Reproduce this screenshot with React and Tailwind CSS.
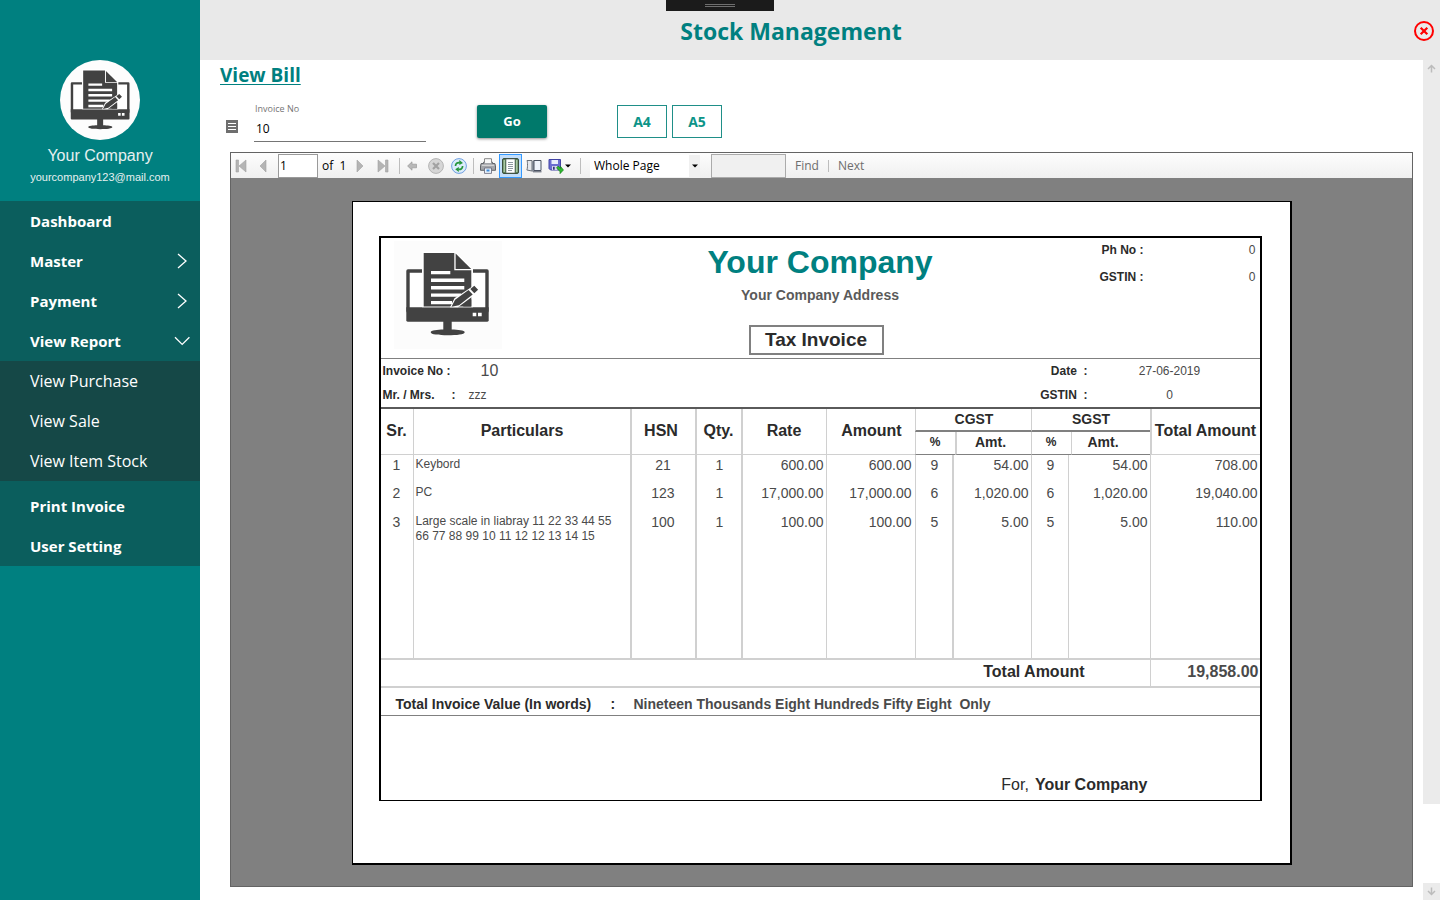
import { useState } from "react";
import clsx from "clsx";

const menu = [
  { label: "Dashboard" },
  { label: "Master", arrow: "right" },
  { label: "Payment", arrow: "right" },
  { label: "View Report", arrow: "down" },
];

const reports = ["View Purchase", "View Sale", "View Item Stock"];

const items = [
  { sr: 1, name: "Keybord", hsn: "21", qty: 1, rate: "600.00", amount: "600.00", pct: 9, tax: "54.00", total: "708.00" },
  { sr: 2, name: "PC", hsn: "123", qty: 1, rate: "17,000.00", amount: "17,000.00", pct: 6, tax: "1,020.00", total: "19,040.00" },
  { sr: 3, name: "Large scale in liabray 11 22 33 44 55 66 77 88 99 10 11 12 12 13 14 15", hsn: "100", qty: 1, rate: "100.00", amount: "100.00", pct: 5, tax: "5.00", total: "110.00" },
];

const Logo = ({ className }) => (
  <svg viewBox="0 0 108 108" className={className} aria-hidden="true">
    <rect x="14" y="30" width="79" height="40" fill="#fff" stroke="#424242" strokeWidth="3.4" strokeLinejoin="round" />
    <path d="M12.3 66.3h82.4v13a1.4 1.4 0 0 1-1.4 1.4H13.7a1.4 1.4 0 0 1-1.4-1.4z" fill="#424242" />
    <path d="M28 10.3h34L79 27.5V66.3H28z" fill="#fff" />
    <path d="M29.7 12h30.600v17.200h17V65.400H29.700z" fill="#424242" />
    <path d="M61.600 12.500l15.600 15.600H61.600z" fill="#424242" />
    <path d="M37 30h19.3v3.3H37zM37 37.5h33.3v3.4H37zM37 45h33.3v3.4H37zM37 52.5h30v3.3H37zM37 60h21v3.3H37z" fill="#fff" />
    <path d="M56 66.3l4.5-9L79.5 44.8l5 4.5-3 4L64 66.3z" fill="#fff" />
    <path d="M57.5 65.8l3.6-7L74.500 49l4.200 4.600L65 64.200zM76.300 47.900l4-3.100 3.800 4-3.800 3.400z" fill="#424242" />
    <path d="M69 65.400l8.300-7.200v7.200z" fill="#424242" />
    <path d="M78.700 71.700h3.600v3.600h-3.600zM84 71.700h3.700v3.600H84z" fill="#fff" />
    <path d="M49.300 80h8.400v8.600c6 .2 13 .8 13 2.700 0 2.200-8 3-17 3s-17-.8-17-3c0-1.900 7-2.500 12.600-2.700z" fill="#424242" />
  </svg>
);

const Arrow = ({ dir }) => (
  <svg width="16" height="16" viewBox="0 0 16 16" fill="none" stroke="#fff" strokeWidth="1.3" aria-hidden="true">
    {dir === "down" ? <path d="M1 4.200l7.200 7.200 7.200-7.200" /> : <path d="M4 1l8 7-8 7" />}
  </svg>
);

const Sidebar = () => (
  <aside className="w-[200px] shrink-0 bg-[#008080] text-white">
    <div className="flex h-[201px] flex-col items-center pt-[60px] font-['Liberation_Sans',sans-serif] text-[#e6f0f0]">
      <div className="flex h-20 w-20 items-center justify-center rounded-full bg-[#fdfdfd]">
        <Logo className="h-[77px] w-[77px]" />
      </div>
      <p className="mt-1 text-[16px] leading-6">Your Company</p>
      <p className="text-[11px] leading-[18px]">yourcompany123@mail.com</p>
    </div>

    <nav className="bg-[#0b5e5d] text-[15px]">
      {menu.map((m) => (
        <a key={m.label} href="#" className="flex h-10 items-center justify-between pl-[30px] pr-[10px] font-bold">
          {m.label}
          {m.arrow && <Arrow dir={m.arrow} />}
        </a>
      ))}
      <div className="mb-[5px] bg-[#154847] text-[16px]">
        {reports.map((r) => (
          <a key={r} href="#" className="flex h-10 items-center pl-[30px]">{r}</a>
        ))}
      </div>
      <a href="#" className="flex h-10 items-center pl-[30px] font-bold">Print Invoice</a>
      <a href="#" className="flex h-10 items-center pl-[30px] font-bold">User Setting</a>
    </nav>
  </aside>
);

const ToolButton = ({ label, className, children }) => (
  <button type="button" aria-label={label} className={clsx("flex h-6 items-center justify-center", className || "w-[23px]")}>
    {children}
  </button>
);

const Divider = ({ className }) => <span className={clsx("w-px bg-[#bdbdbd]", className)}></span>;

const Toolbar = () => {
  const [page, setPage] = useState("1");
  const [find, setFind] = useState("");

  return (
    <div className="flex h-[25px] items-center bg-linear-to-b from-[#fdfdfd] to-[#f0f0f0] text-[12px] text-black">
      <ToolButton label="First page" className="w-5">
        <svg width="12" height="14" viewBox="0 0 12 14"><path d="M1 1h2.500v12H1zM11 1v12L4 7z" fill="#b4b4b4" stroke="#a2a2a2" strokeWidth=".6" /></svg>
      </ToolButton>
      <ToolButton label="Previous page" className="w-6">
        <svg width="8" height="14" viewBox="0 0 8 14"><path d="M7 1v12L1 7z" fill="#b4b4b4" stroke="#a2a2a2" strokeWidth=".6" /></svg>
      </ToolButton>
      <input aria-label="Page number" value={page} onChange={(e) => setPage(e.target.value)} className="ml-[3px] h-6 w-10 border border-[#9a9a9a] bg-white px-px pb-px outline-none" />
      <span className="ml-1 w-[26px] whitespace-pre">of  1</span>
      <ToolButton label="Next page">
        <svg width="8" height="14" viewBox="0 0 8 14"><path d="M1 1v12l6-6z" fill="#b4b4b4" stroke="#a2a2a2" strokeWidth=".6" /></svg>
      </ToolButton>
      <ToolButton label="Last page">
        <svg width="12" height="14" viewBox="0 0 12 14"><path d="M8.500 1H11v12H8.500zM1 1v12l7-6z" fill="#b4b4b4" stroke="#a2a2a2" strokeWidth=".6" /></svg>
      </ToolButton>
      <Divider className="ml-[5px] h-4" />
      <ToolButton label="Back" className="w-6">
        <svg width="10" height="10" viewBox="0 0 10 10"><path d="M.6 5L5 .8v2.400h4.500v3.600H5v2.400z" fill="#b8b8b8" stroke="#999" strokeWidth=".7" /></svg>
      </ToolButton>
      <ToolButton label="Stop">
        <svg width="16" height="16" viewBox="0 0 16 16"><circle cx="8" cy="8" r="7.400" fill="#d6d6d6" stroke="#b4b4b4" /><path d="M5 5l6 6M11 5l-6 6" stroke="#a2a2a2" strokeWidth="2.200" /></svg>
      </ToolButton>
      <ToolButton label="Refresh">
        <svg width="16" height="16" viewBox="0 0 16 16">
          <circle cx="8" cy="8" r="7.400" fill="#dcecfb" stroke="#6f9fe0" />
          <path d="M4.500 8C4.500 5.500 6.300 4.300 8.800 4.600M11.600 8c0 2.500-1.800 3.700-4.200 3.400" fill="none" stroke="#27963b" strokeWidth="1.700" />
          <path d="M8.300 2l3.700 3-3.700 2zM7.800 9.100v4.800L4.200 11.200z" fill="#27963b" />
        </svg>
      </ToolButton>
      <Divider className="ml-[3px] mr-[2px] h-4" />
      <ToolButton label="Print">
        <svg width="16" height="16" viewBox="0 0 16 16">
          <path d="M4.500.8h7v5h-7z" fill="#f4f4f4" stroke="#777" />
          <path d="M1.200 5.500h2.500V4h8.600v1.500h2.500l.7 2v4.800H.5V7.500z" fill="#a4a6aa" stroke="#55585c" strokeWidth=".9" />
          <path d="M4.800 1.500h6.400V5H4.800z" fill="#fafafa" />
          <path d="M2 7.300h12" stroke="#dedede" />
          <path d="M4.500 10h7v5.400h-7z" fill="#eaf3fc" stroke="#667" strokeWidth=".8" />
          <path d="M6.500 11.500h3v2h-3z" fill="#3d8ad8" />
        </svg>
      </ToolButton>
      <ToolButton label="Print layout" className="w-[23px] border border-[#3399ff] bg-[#c3defa]">
        <svg width="17" height="16" viewBox="0 0 17 16">
          <rect x=".5" y=".5" width="16" height="15" rx="1.500" fill="#5b7f5a" stroke="#3c4f3c" />
          <path d="M1.500 2h1.500v12H1.500zM14 2h1.500v12H14z" fill="#a9c7a2" />
          <path d="M4 1h9v14H4z" fill="#fff" stroke="#53605a" strokeWidth=".6" />
          <path d="M6 4.500h5M6 6.500h5M6 8.500h5M6 10.500h5M6 12.500h4" stroke="#8e98a0" />
        </svg>
      </ToolButton>
      <ToolButton label="Page setup">
        <svg width="16" height="14" viewBox="0 0 16 14">
          <path d="M1 1.500h5v10.500L.8 11c.9-1 .9-8.500.2-9.500z" fill="#e4e7ec" stroke="#6a6f78" />
          <path d="M6 2.500l2-1.500v10.500l-2 1.500z" fill="#848b98" />
          <path d="M8 1.500h7v10H8z" fill="#eef3fc" stroke="#4b5262" />
          <path d="M7 12.800h8.500" stroke="#4b5262" />
        </svg>
      </ToolButton>
      <ToolButton label="Export" className="w-[29px] gap-px">
        <svg width="16" height="16" viewBox="0 0 16 16">
          <path d="M1 1.500h11.500v10.500H2.500L1 10.500z" fill="#6a6dd0" stroke="#4143a4" />
          <path d="M3.500 2h6.500v4H3.500z" fill="#e8eefc" />
          <path d="M4 8h5.500v4H4z" fill="#d6d8ec" />
          <path d="M5 8.800h1.700v3H5z" fill="#333680" />
          <path d="M8.500 9.800l1.700-1.700 2.300 2.200V8.300l3 3.700-3.500 3.700v-2z" fill="#2eb82e" stroke="#13761a" strokeWidth=".6" />
        </svg>
        <svg width="6" height="4" viewBox="0 0 6 4"><path d="M0 .5h6L3 3.500z" fill="#000" /></svg>
      </ToolButton>
      <Divider className="ml-[6px] mr-[9px] h-4" />
      <div className="relative flex h-[22px] w-[110px] items-center bg-white">
        <select aria-label="Zoom" defaultValue="Whole Page" className="h-full w-full appearance-none bg-transparent pl-1 outline-none">
          <option>Whole Page</option>
          <option>Page Width</option>
          <option>100%</option>
        </select>
        <span className="pointer-events-none absolute inset-y-0 right-0 flex w-[11px] items-center justify-center bg-[#f0f0f0]">
          <svg width="6" height="4" viewBox="0 0 6 4"><path d="M0 .5h6L3 3.500z" fill="#000" /></svg>
        </span>
      </div>
      <input aria-label="Find text" value={find} onChange={(e) => setFind(e.target.value)} className="ml-[11px] h-6 w-[75px] border border-[#ababab] bg-[#f0f0f0] px-1 outline-none" />
      <button type="button" className="ml-[9px] text-[#6d6d6d]">Find</button>
      <Divider className="mx-[9px] h-3" />
      <button type="button" className="text-[#6d6d6d]">Next</button>
    </div>
  );
};

const Th = ({ className, ...props }) => (
  <th className={clsx("border-[#d0d0d0] pl-0 pt-0 text-center font-bold text-[#2b2b2b]", className)} {...props} />
);

const ItemsTable = () => (
  <table className="w-full table-fixed border-separate border-spacing-0 text-[14px] text-[#4a4a4a]">
    <colgroup>
      <col className="w-[32px]" />
      <col />
      <col className="w-[65px]" />
      <col className="w-[46px]" />
      <col className="w-[85px]" />
      <col className="w-[89px]" />
      <col className="w-[37px]" />
      <col className="w-[3px]" />
      <col className="w-[76px]" />
      <col className="w-[37px]" />
      <col className="w-[3px]" />
      <col className="w-[78px]" />
      <col className="w-[110px]" />
    </colgroup>
    <thead>
      <tr className="h-[23px] text-[16px]">
        <Th rowSpan={2} className="border-b pb-[2px] pr-0">Sr.</Th>
        <Th rowSpan={2} className="border-b border-l pb-[2px] pr-0">Particulars</Th>
        <Th rowSpan={2} className="border-b border-l-2 pb-[2px] pr-[6px]">HSN</Th>
        <Th rowSpan={2} className="border-b border-l-2 pb-[2px] pr-[2px]">Qty.</Th>
        <Th rowSpan={2} className="border-b border-l-2 pb-[2px] pr-[2px]">Rate</Th>
        <Th rowSpan={2} className="border-b border-l pb-[2px] pr-0">Amount</Th>
        <Th colSpan={3} className="border-b-2 border-l border-b-[#808080] pb-px pr-0 text-[14px] leading-5">CGST</Th>
        <Th colSpan={3} className="border-b-2 border-l border-b-[#808080] pb-px pr-0 text-[14px] leading-5">SGST</Th>
        <Th rowSpan={2} className="whitespace-nowrap border-b border-l-2 pb-[2px] pr-0">Total Amount</Th>
      </tr>
      <tr className="h-[23px] text-[14px] leading-5">
        <Th colSpan={2} className="border-b border-l border-b-[#808080] pb-[2px] pr-[2px] text-[12px]">%</Th>
        <Th className="border-b border-l-2 border-b-[#808080] pb-[2px] pr-2">Amt.</Th>
        <Th colSpan={2} className="border-b border-l border-b-[#808080] pb-[2px] pr-[2px] text-[12px]">%</Th>
        <Th className="border-b border-l border-b-[#808080] pb-[2px] pr-4">Amt.</Th>
      </tr>
    </thead>
    <tbody className="[&_td]:border-[#d0d0d0] [&_td]:p-0 [&_td]:align-top">
      {items.map((it, i) => (
        <tr key={it.sr} className={clsx("leading-5", i === items.length - 1 ? "h-[146px]" : i === 0 ? "h-[28px]" : "h-[29px]")}>
          <td className="text-center">{it.sr}</td>
          <td className="border-l"><p className="pl-[2px] pr-3 pt-[2px] text-[12px] leading-[15px]">{it.name}</p></td>
          <td className="border-l-2 text-center"><p className="pr-[2px]">{it.hsn}</p></td>
          <td className="border-l-2 text-center">{it.qty}</td>
          <td className="border-l-2 text-right"><p className="pr-[3px]">{it.rate}</p></td>
          <td className="border-l text-right"><p className="pr-1">{it.amount}</p></td>
          <td className="border-l text-center">{it.pct}</td>
          <td colSpan={2} className="border-l-2 text-right"><p className="pr-[3px]">{it.tax}</p></td>
          <td className="border-l text-center">{it.pct}</td>
          <td colSpan={2} className="border-l text-right"><p className="pr-[2px]">{it.tax}</p></td>
          <td className="border-l text-right"><p className="pr-[2px]">{it.total}</p></td>
        </tr>
      ))}
    </tbody>
    <tfoot>
      <tr className="h-[30px] text-[16px] leading-6">
        <th colSpan={12} className="border-y-2 border-[#d0d0d0] pb-[2px] pl-0 pr-[65px] pt-0 text-right font-bold text-[#2b2b2b]">Total Amount</th>
        <td className="border-y-2 border-l border-[#d0d0d0] pb-[2px] pl-0 pr-px pt-0 text-right font-bold">19,858.00</td>
      </tr>
    </tfoot>
  </table>
);

const Invoice = () => (
  <article className="mx-auto w-full max-w-[940px] border border-b-2 border-r-2 border-black bg-white pb-[62px] pl-[26px] pr-7 pt-[34px] font-['Liberation_Sans',sans-serif] text-[#4a4a4a]">
    <div className="border-2 border-b border-black">
      <header className="grid h-[121px] grid-cols-[170px_1fr_170px] border-b border-[#808080]">
        <div className="pl-[13px] pt-[3px]">
          <Logo className="h-[108px] w-[108px] bg-[#fcfcfc]" />
        </div>
        <div className="flex flex-col items-center">
          <h2 className="mt-1 text-[32px] font-bold leading-10 text-[#008080]">Your Company</h2>
          <p className="mt-[3px] text-[14px] font-bold leading-5 text-[#5a5a5a]">Your Company Address</p>
          <p className="mr-2 mt-5 h-[30px] w-[135px] border-2 border-[#808080] text-center text-[19px] font-bold leading-[26px] text-[#2b2b2b]">Tax Invoice</p>
        </div>
        <dl className="grid auto-rows-[27px] grid-cols-[54px_1fr] content-start pr-1 text-right text-[12px] leading-6">
          <dt className="whitespace-nowrap font-bold text-[#2b2b2b]">Ph No :</dt>
          <dd>0</dd>
          <dt className="whitespace-nowrap font-bold text-[#2b2b2b]">GSTIN :</dt>
          <dd>0</dd>
        </dl>
      </header>

      <section className="flex h-[50px] justify-between border-b-2 border-[#5a5a5a] text-[12px] leading-6">
        <dl className="grid grid-cols-[86px_1fr] content-start pl-[2px]">
          <dt className="font-bold text-[#2b2b2b]">Invoice No :</dt>
          <dd className="pl-3 text-[16px]">10</dd>
          <dt className="flex font-bold text-[#2b2b2b]"><span className="w-[69px]">Mr. / Mrs.</span>:</dt>
          <dd>zzz</dd>
        </dl>
        <dl className="grid grid-cols-[52px_164px] content-start pr-2 text-right">
          <dt className="whitespace-pre font-bold text-[#2b2b2b]">Date  :</dt>
          <dd className="text-center">27-06-2019</dd>
          <dt className="whitespace-pre font-bold text-[#2b2b2b]">GSTIN  :</dt>
          <dd className="text-center">0</dd>
        </dl>
      </section>

      <ItemsTable />

      <p className="flex h-[28px] border-b border-[#808080] pl-[15px] pt-[6px] text-[14px] font-bold leading-5">
        <span className="w-[215px] text-[#2b2b2b]">Total Invoice Value (In words)</span>
        <span className="w-[23px] text-[#2b2b2b]">:</span>
        <span className="whitespace-pre">Nineteen Thousands Eight Hundreds Fifty Eight  Only</span>
      </p>
      <p className="flex h-[84px] items-end justify-end gap-[6px] pb-[3px] pr-[112px] text-[16px] leading-6 text-[#2b2b2b]">
        For, <b>Your Company</b>
      </p>
    </div>
  </article>
);

const Header = () => (
  <header className="flex h-[60px] items-center bg-[#e9e9e9] pt-[2px]">
    <h1 className="flex-1 text-center text-[23px] font-bold text-[#008080]">Stock Management</h1>
    <button type="button" aria-label="Close" className="flex w-[58px] justify-end pr-[6px]">
      <svg width="20" height="20" viewBox="0 0 20 20" fill="none" stroke="#f00">
        <circle cx="10" cy="10" r="9" strokeWidth="2" />
        <path d="M6.700 6.700l6.600 6.600M13.300 6.700l-6.600 6.600" strokeWidth="2.200" />
      </svg>
    </button>
  </header>
);

const ScrollBar = () => (
  <div className="flex w-[17px] shrink-0 flex-col" aria-hidden="true">
    <div className="flex-1 bg-[#ebebeb] pl-1 pt-1">
      <svg width="9" height="9" viewBox="0 0 9 9" fill="none" stroke="#bcbcbc" strokeWidth="1.500"><path d="M4.500 8.500V1.500M1 5l3.500-3.500L8 5" /></svg>
    </div>
    <div className="h-[79px]"></div>
    <div className="h-[17px] bg-[#ebebeb] pl-1 pt-1">
      <svg width="9" height="9" viewBox="0 0 9 9" fill="none" stroke="#bcbcbc" strokeWidth="1.500"><path d="M4.500 .5v7M1 4l3.500 3.500L8 4" /></svg>
    </div>
  </div>
);

const BillForm = () => {
  const [invoiceNo, setInvoiceNo] = useState("10");

  return (
    <form className="mt-3 flex h-[49px] items-start pl-[6px]" onSubmit={(e) => e.preventDefault()}>
      <svg width="12" height="13" viewBox="0 0 12 13" className="mt-[17px]" aria-hidden="true">
        <path d="M0 0h12v13H0z" fill="#6e6e6e" />
        <path d="M2 3.500h8M2 6.500h8M2 9.500h8" stroke="#fff" strokeWidth="1.200" />
      </svg>
      <div className="ml-4 w-[172px]">
        <label htmlFor="invoice-no" className="block pl-px text-[9px] leading-3 text-[#757575]">Invoice No</label>
        <input
          id="invoice-no"
          value={invoiceNo}
          onChange={(e) => setInvoiceNo(e.target.value)}
          className="block h-[27px] w-full border-b border-[#757575] px-[2px] text-[12px] text-black outline-none"
        />
      </div>
      <button type="submit" className="ml-[51px] mt-[2px] h-[33px] w-[70px] rounded-[2px] bg-[#00796b] text-[13px] font-bold text-white shadow-[0_1px_3px_rgba(0,0,0,0.45)]">Go</button>
      <button type="button" className="ml-[70px] mt-[2px] h-[33px] w-[50px] border border-[#1f8f88] text-[14px] font-bold text-[#0c9488]">A4</button>
      <button type="button" className="ml-[5px] mt-[2px] h-[33px] w-[50px] border border-[#1f8f88] text-[14px] font-bold text-[#0c9488]">A5</button>
    </form>
  );
};

const App = () => (
  <div className="relative flex min-h-screen bg-white font-['Open_Sans','Noto_Sans',sans-serif]">
    <Sidebar />
    <div className="flex min-w-0 flex-1 flex-col">
      <Header />
      <div className="flex flex-1">
        <main className="flex min-w-0 flex-1 flex-col pb-[13px] pl-5 pr-[10px]">
          <h2 className="h-[31px] text-[19px] font-bold leading-[31px] text-[#008080] underline underline-offset-2">View Bill</h2>
          <BillForm />
          <div className="ml-[10px] flex flex-1 flex-col border border-[#646464]">
            <Toolbar />
            <div className="flex-1 bg-[#808080] pb-[21px] pt-[23px]">
              <Invoice />
            </div>
          </div>
        </main>
        <ScrollBar />
      </div>
    </div>

    {/* Window grab handle */}
    <div className="absolute left-1/2 top-0 flex h-[11px] w-[108px] -translate-x-1/2 items-center justify-center bg-[#1b1b1b]">
      <span className="h-[3px] w-[30px] border-y border-[#6e6e6e]"></span>
    </div>
  </div>
);

export default App;
